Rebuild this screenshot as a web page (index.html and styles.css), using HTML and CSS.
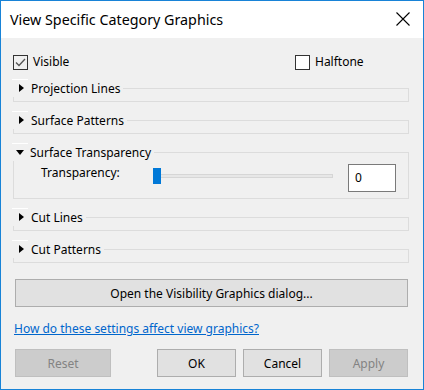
FILE: index.html
```html
<!DOCTYPE html>
<html lang="en">
<head>
  <meta charset="UTF-8">
  <title>View Specific Category Graphics</title>
  <link rel="stylesheet" href="styles.css">
</head>
<body>

  <div class="dialog">
    <div class="titlebar">
      <span class="title">View Specific Category Graphics</span>
      <svg class="close" width="14" height="14" viewBox="0 0 14 14">
        <path d="M0.5 0.5 L13.5 13.5 M13.5 0.5 L0.5 13.5" stroke="#000" stroke-width="1.1" fill="none"/>
      </svg>
    </div>

    <div class="content">
      <div class="checks">
        <label class="check">
          <span class="box">
            <svg width="13" height="13" viewBox="0 0 13 13">
              <path d="M2 6.5 L5 9.5 L11 3" stroke="#555" stroke-width="1.3" fill="none"/>
            </svg>
          </span>
          Visible
        </label>
        <label class="check">
          <span class="box"></span>
          Halftone
        </label>
      </div>

      <!-- groupes repliés / dépliés -->
      <div class="group">
        <div class="group-head"><span class="arrow-right"></span>Projection Lines</div>
      </div>

      <div class="group">
        <div class="group-head"><span class="arrow-right"></span>Surface Patterns</div>
      </div>

      <div class="group open">
        <div class="group-head"><span class="arrow-down"></span>Surface Transparency</div>
        <div class="trans-row">
          <span class="trans-label">Transparency:</span>
          <div class="slider">
            <div class="track"></div>
            <div class="thumb"></div>
          </div>
          <div class="num-input">0</div>
        </div>
      </div>

      <div class="group">
        <div class="group-head"><span class="arrow-right"></span>Cut Lines</div>
      </div>

      <div class="group">
        <div class="group-head"><span class="arrow-right"></span>Cut Patterns</div>
      </div>

      <div class="btn wide">Open the Visibility Graphics dialog...</div>

      <a class="help" href="#">How do these settings affect view graphics?</a>

      <div class="buttons">
        <div class="btn disabled reset">Reset</div>
        <div class="btn">OK</div>
        <div class="btn">Cancel</div>
        <div class="btn disabled">Apply</div>
      </div>
    </div>
  </div>

</body>
</html>
```

FILE: styles.css
```css
body {
  margin: 0;
  padding: 0;
  font-family: 'Noto Sans', 'Open Sans', sans-serif;
  font-size: 12px;
  color: #000000;
  background: #f0f0f0;
}

.dialog {
  width: 424px;
  height: 390px;
  box-sizing: border-box;
  border: 1px solid #1883d7;
  background: #f0f0f0;
  display: flex;
  flex-direction: column;
}

.titlebar {
  height: 37px;
  background: #ffffff;
  display: flex;
  align-items: center;
  padding: 0 13px 0 9px;
}

.title {
  font-size: 14.3px;
  flex: 1;
  margin-top: -1px;
}

.close {
  margin-top: -1px;
}

.content {
  padding: 0 14px 0 12px;
  display: flex;
  flex-direction: column;
}

/* Cases à cocher */
.checks {
  margin-top: 16px;
  display: grid;
  grid-template-columns: 282px auto;
  height: 16px;
}

.check {
  display: flex;
  align-items: center;
  line-height: 16px;
}

.box {
  width: 13px;
  height: 13px;
  border: 1px solid #333333;
  background: #ffffff;
  margin-right: 5px;
  display: flex;
}

.check:first-child .box {
  background: #f0f0f0;
}

/* Groupes */
.group {
  margin-top: 18px;
  border: 1px solid #dcdcdc;
  height: 14px;
  box-sizing: border-box;
}

.group.open {
  height: 47px;
}

.group-head {
  position: relative;
  margin: -10px 0 0 -1px;
  height: 18px;
  width: fit-content;
  padding-right: 3px;
  background: #f0f0f0;
  display: flex;
  align-items: center;
}

.group-head::before {
  content: "";
  position: absolute;
  top: 0;
  left: -1px;
  width: 16px;
  height: 1px;
  background: #ffffff;
}

.arrow-right {
  width: 0;
  height: 0;
  border-top: 4px solid transparent;
  border-bottom: 4px solid transparent;
  border-left: 5px solid #000000;
  margin: 0 7px 0 6px;
}

.arrow-down {
  width: 0;
  height: 0;
  border-left: 4.5px solid transparent;
  border-right: 4.5px solid transparent;
  border-top: 5px solid #000000;
  margin: 0 6px 0 3px;
}

.trans-row {
  display: flex;
  align-items: flex-start;
  margin-top: 3px;
  padding-left: 27px;
}

.trans-label {
  width: 112px;
  margin-top: 2px;
  line-height: 14px;
}

.slider {
  position: relative;
  width: 180px;
  height: 16px;
  margin-top: 4px;
}

.track {
  margin: 6px 0 0 0;
  height: 2px;
  background: #e7e7e7;
  border: 1px solid #d6d6d6;
}

.thumb {
  position: absolute;
  top: 0;
  left: 0;
  width: 8px;
  height: 16px;
  background: #0078d7;
}

.num-input {
  margin-left: 15px;
  width: 48px;
  height: 28px;
  box-sizing: border-box;
  border: 1px solid #7a7a7a;
  background: #ffffff;
  padding-left: 6px;
  line-height: 25px;
}

/* Boutons */
.btn {
  height: 28px;
  box-sizing: border-box;
  border: 1px solid #adadad;
  background: #e1e1e1;
  display: flex;
  align-items: center;
  justify-content: center;
}

.btn.wide {
  margin: 16px 1px 0 2px;
}

.help {
  margin-top: 15px;
  color: #0066cc;
  line-height: 14px;
  align-self: flex-start;
  margin-left: 1px;
}

.buttons {
  margin-top: 13px;
  display: flex;
  gap: 7px;
  padding: 0 1px 0 2px;
}

.buttons .btn {
  width: 79px;
}

.buttons .btn.reset {
  width: 96px;
  margin-right: auto;
}

.btn.disabled {
  background: #cccccc;
  border-color: #bfbfbf;
  color: #838383;
}
```
